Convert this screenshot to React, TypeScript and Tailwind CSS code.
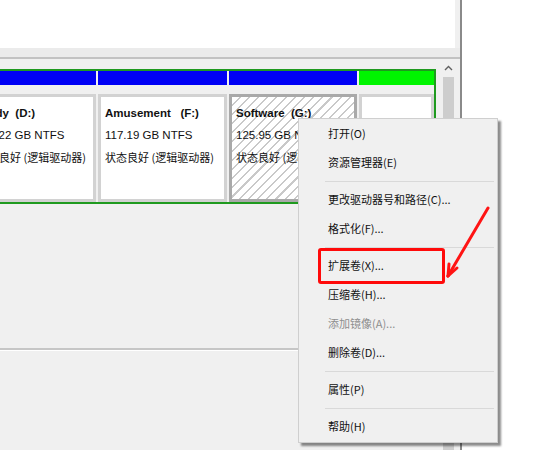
import React from 'react';

type MenuEntry = { label?: string; disabled?: boolean; sep?: boolean };

const menuItems: MenuEntry[] = [
  { label: '打开(O)' },
  { label: '资源管理器(E)' },
  { sep: true },
  { label: '更改驱动器号和路径(C)...' },
  { label: '格式化(F)...' },
  { sep: true },
  { label: '扩展卷(X)...' },
  { label: '压缩卷(H)...' },
  { label: '添加镜像(A)...', disabled: true },
  { label: '删除卷(D)...' },
  { sep: true },
  { label: '属性(P)' },
  { sep: true },
  { label: '帮助(H)' },
];

interface PartitionProps {
  name: string;
  size: string;
  status: string;
  className: string;
  selected?: boolean;
}

const Partition: React.FC<PartitionProps> = ({ name, size, status, className, selected }) => {
  return (
    <div className={`flex flex-col shrink-0 ${className}`}>
      <div className="h-[14px] bg-[#0000f5]" />
      <div
        className={`mt-[9px] flex-1 border-[3px] px-[4px] pt-[5px] leading-[22px] text-[11.5px] text-[#111111] whitespace-pre ${
          selected
            ? 'border-[#a9a9a9] bg-[repeating-linear-gradient(135deg,#ffffff_0px,#ffffff_5px,#c9c9c9_5px,#c9c9c9_6.5px)]'
            : 'border-[#d2d2d2] bg-white'
        }`}
      >
        <div className="font-bold">{name}</div>
        <div>{size}</div>
        <div className="font-['Noto_Sans_CJK_SC',sans-serif] text-[11px]">{status}</div>
      </div>
    </div>
  );
};

const ContextMenu: React.FC = () => {
  return (
    <div className="absolute left-[298px] top-[118px] w-[200px] h-[325px] bg-[#f0f0f0] border border-[#cfcfcf] shadow-[3px_3px_2px_rgba(0,0,0,0.45)] font-['Noto_Sans_CJK_SC',sans-serif] text-[11px]">
      {menuItems.map((item, i) =>
        item.sep ? (
          <div key={i} className="h-[8px] flex items-center pl-[26px] pr-[3px]">
            <div className="h-px w-full bg-[#d9d9d9]" />
          </div>
        ) : (
          <div
            key={i}
            className={`h-[29px] flex items-center pl-[29px] ${
              item.disabled ? 'text-[#8e8e8e]' : 'text-[#111111]'
            }`}
          >
            {item.label}
          </div>
        )
      )}
    </div>
  );
};

export default function App() {
  return (
    <div className="w-[550px] h-[450px] relative overflow-hidden bg-white flex font-['Liberation_Sans','Noto_Sans_CJK_SC',sans-serif]">
      <div className="w-[462px] h-full flex flex-col border-r-2 border-[#8a8a8a] bg-[#f0f0f0]">
        <div className="h-[48px] bg-white mr-[5px]" />
        <div className="h-[9px] bg-[#ebebeb]" />
        <div className="h-[2px] bg-[#c2c2c2]" />

        <div className="flex-1 flex">
          <div className="flex-1 flex flex-col">
            <div className="mt-[10px] h-[135px] w-[436px] border-2 border-l-0 border-[#1f9a1f] flex gap-[2px] overflow-hidden">
              <Partition
                className="w-[126px] -ml-[30px]"
                name={'Study  (D:)'}
                size="117.22 GB NTFS"
                status="状态良好 (逻辑驱动器)"
              />
              <Partition
                className="w-[129px]"
                name={'Amusement   (F:)'}
                size="117.19 GB NTFS"
                status="状态良好 (逻辑驱动器)"
              />
              <Partition
                className="w-[128px]"
                name={'Software  (G:)'}
                size="125.95 GB NTFS"
                status="状态良好 (逻辑驱动器)"
                selected
              />
              <div className="flex-1 flex flex-col">
                <div className="h-[14px] bg-[#00f500]" />
                <div className="mt-[9px] flex-1 border-[3px] border-[#d2d2d2] bg-white" />
              </div>
            </div>
            <div className="h-[146px] border-b-2 border-[#c6c6c6]" />
            <div className="h-px bg-white" />
          </div>

          <div className="w-[17px] mr-[3px] flex flex-col items-center">
            <svg width="9" height="6" viewBox="0 0 9 6" className="mt-[6px]">
              <path d="M1 5 L4.5 1.5 L8 5" fill="none" stroke="#606060" strokeWidth="1.4" />
            </svg>
            <div className="mt-[6px] w-[11px] flex-1 bg-[#cdcdcd]" />
          </div>
        </div>
      </div>
      <div className="flex-1 bg-white" />

      <ContextMenu />

      <div className="absolute left-[318px] top-[248px] w-[127px] h-[36px] border-[3px] border-[#ff0a0a] rounded-[3px]" />

      <svg className="absolute left-0 top-0 pointer-events-none" width="550" height="450" viewBox="0 0 550 450">
        <g stroke="#ff1414" strokeWidth="3" strokeLinecap="round" fill="none">
          <path d="M488 208 L448 276" />
          <path d="M448 276 L457 268" />
          <path d="M448 276 L449 264" />
        </g>
      </svg>
    </div>
  );
}
